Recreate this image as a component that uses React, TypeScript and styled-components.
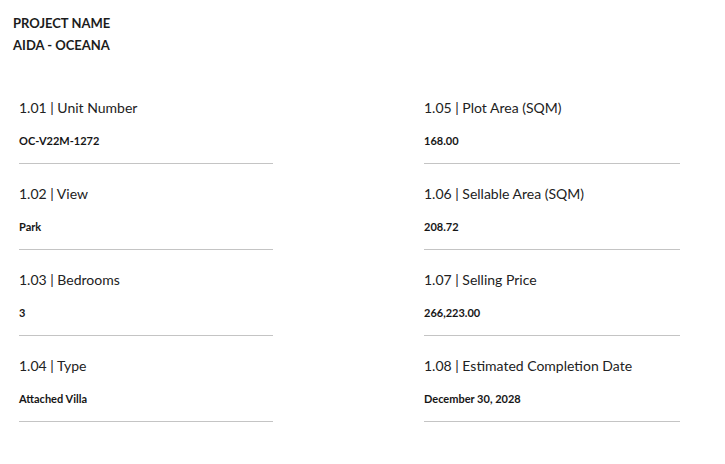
import React from "react"
import styled, { createGlobalStyle } from "styled-components"

const GlobalStyle = createGlobalStyle`
	html, body {
		margin: 0;
		padding: 0;
		background: #ffffff;
	}

	body {
		font-family: Lato, "Open Sans", sans-serif;
		color: #1c1c1c;
	}
`

const Page = styled.div`
	width: 725px;
	height: 464px;
	padding-top: 12px;
	box-sizing: border-box;
`

const ProjectHeader = styled.div`
	padding-left: 13px;
	font-size: 13px;
	font-weight: 700;
	line-height: 22px;
`

const FieldGrid = styled.div`
	display: grid;
	grid-template-columns: 254px 256px;
	column-gap: 151px;
	padding-left: 19px;
	margin-top: 42px;
`

const Column = styled.div`
	display: flex;
	flex-direction: column;
`

const Field = styled.div`
	display: flex;
	flex-direction: column;
	height: 86px;
`

const Label = styled.div`
	font-size: 14px;
	line-height: 20px;
	color: #222222;
`

const Value = styled.div`
	margin-top: 15px;
	font-size: 11px;
	font-weight: 700;
	line-height: 16px;
	color: #161616;
`

const Rule = styled.div`
	margin-top: 14px;
	height: 1px;
	background: #c4c4c4;
`

interface FieldData {
	code: string
	label: string
	value: string
}

const leftFields: FieldData[] = [
	{ code: "1.01", label: "Unit Number", value: "OC-V22M-1272" },
	{ code: "1.02", label: "View", value: "Park" },
	{ code: "1.03", label: "Bedrooms", value: "3" },
	{ code: "1.04", label: "Type", value: "Attached Villa" }
]

const rightFields: FieldData[] = [
	{ code: "1.05", label: "Plot Area (SQM)", value: "168.00" },
	{ code: "1.06", label: "Sellable Area (SQM)", value: "208.72" },
	{ code: "1.07", label: "Selling Price", value: "266,223.00" },
	{ code: "1.08", label: "Estimated Completion Date", value: "December 30, 2028" }
]

const FieldBlock = ({ code, label, value }: FieldData) => (
	<Field>
		<Label>{code} | {label}</Label>
		<Value>{value}</Value>
		<Rule />
	</Field>
)

const App = () => {
	return (
		<>
			<GlobalStyle />
			<Page>
				<ProjectHeader>
					<div>PROJECT NAME</div>
					<div>AIDA - OCEANA</div>
				</ProjectHeader>
				<FieldGrid>
					<Column>
						{leftFields.map(f => <FieldBlock key={f.code} {...f} />)}
					</Column>
					<Column>
						{rightFields.map(f => <FieldBlock key={f.code} {...f} />)}
					</Column>
				</FieldGrid>
			</Page>
		</>
	)
}

export default App
